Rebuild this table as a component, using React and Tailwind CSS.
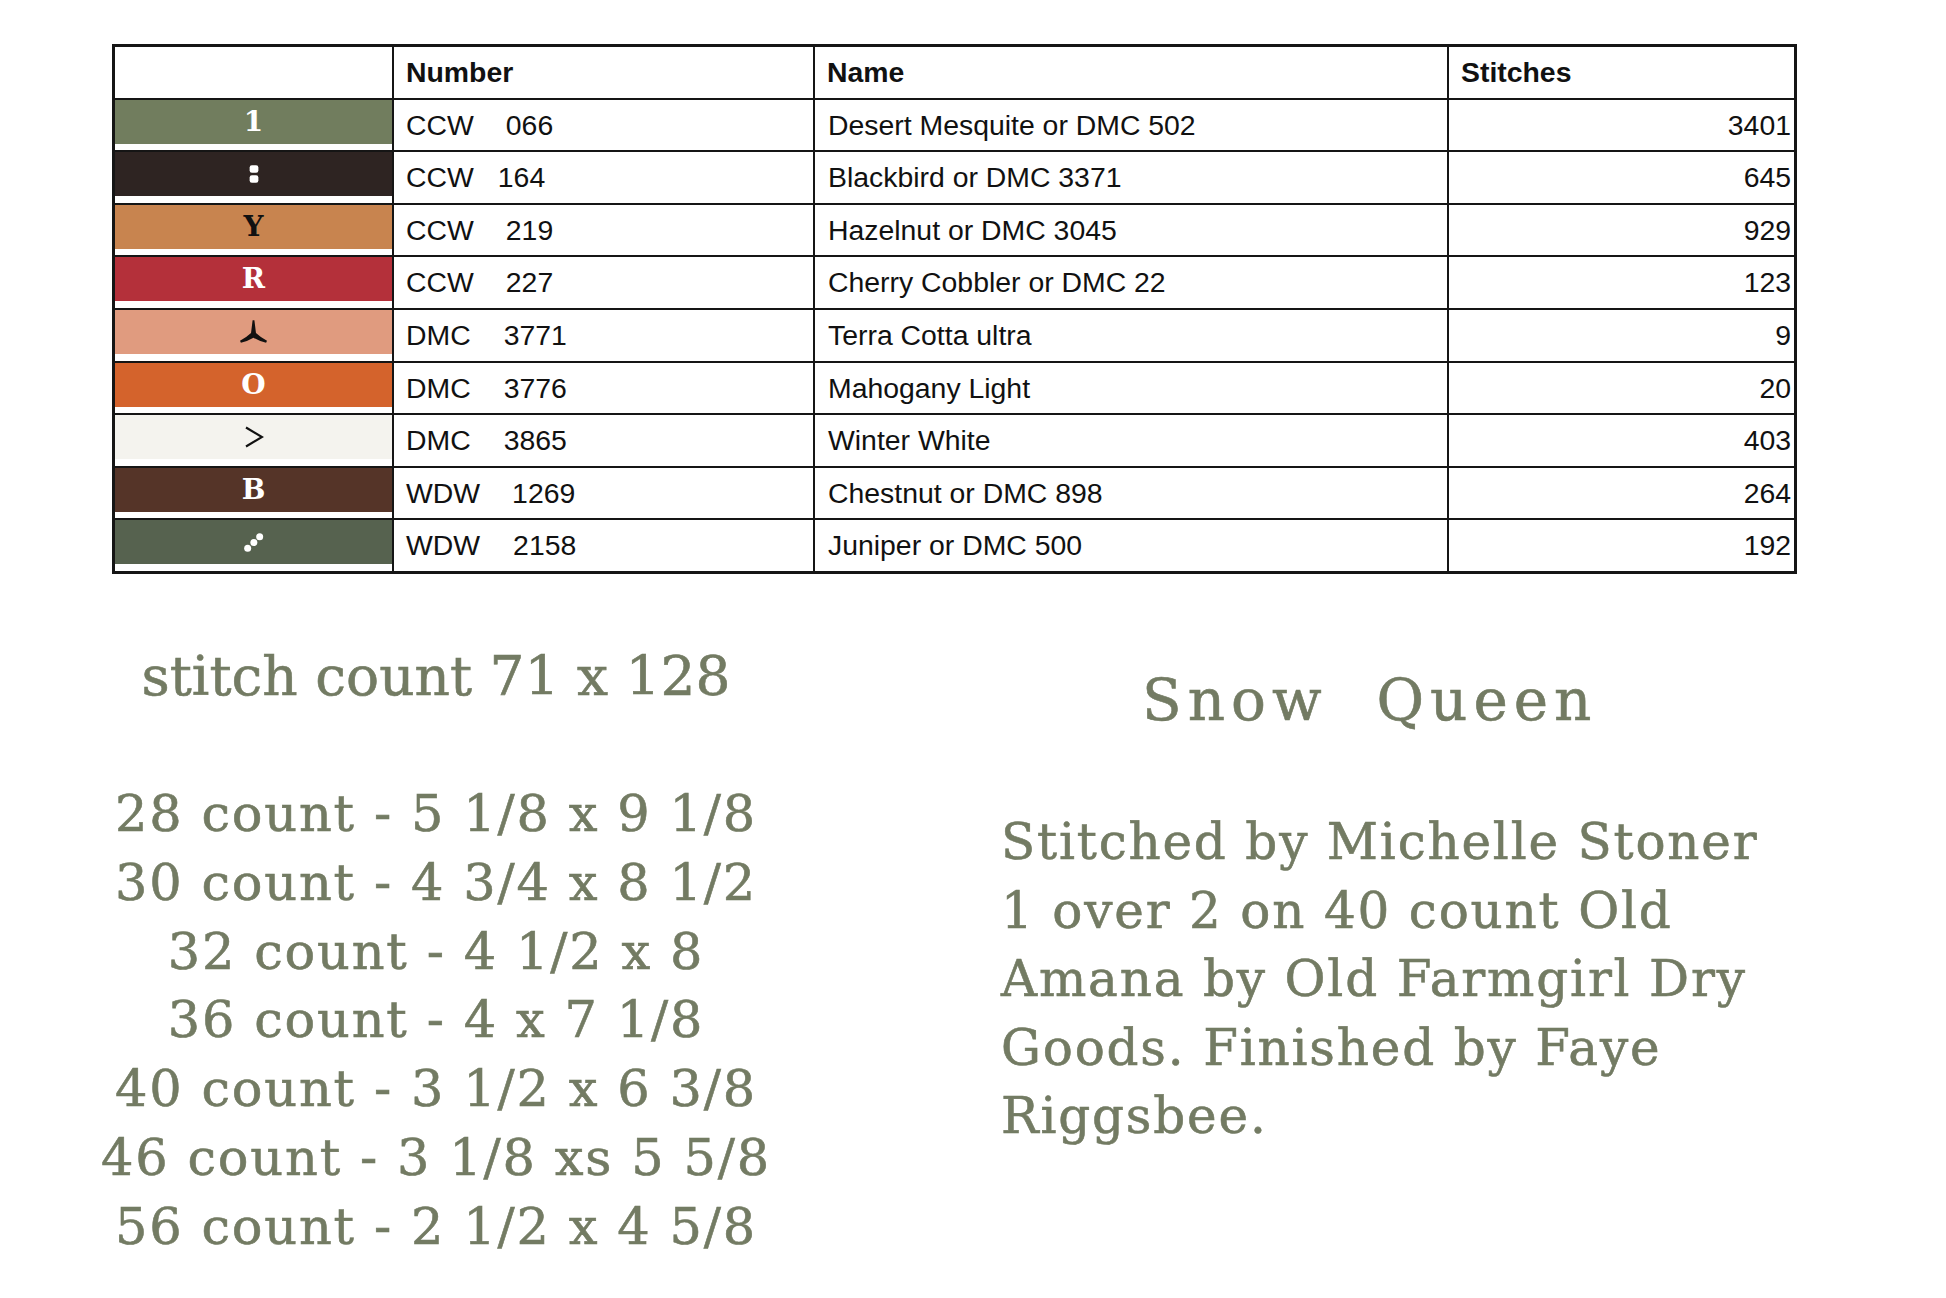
import React from "react";

const sage = "text-[#737b63]";

const TriStar = () => (
  <svg width="27" height="23" viewBox="0 0 24 20">
    <path d="M11.2 0 L12.8 0 L14.2 11.3 Q18.5 15.3 24 18.3 L23.2 20 Q17 18.6 12 15.6 Q7 18.6 0.8 20 L0 18.3 Q5.5 15.3 9.8 11.3 Z" fill="#111" />
  </svg>
);

const Dots = () => (
  <svg width="21" height="21" viewBox="0 0 18 18">
    <circle cx="4" cy="14" r="3" fill="#fff" />
    <circle cx="9.3" cy="9" r="3" fill="#fff" />
    <circle cx="14.3" cy="4" r="3" fill="#fff" />
  </svg>
);

const Colon = () => (
  <svg width="10" height="20" viewBox="0 0 8 16">
    <rect x="0.5" y="1" width="7" height="6" rx="1.8" fill="#fff" />
    <rect x="0.5" y="9" width="7" height="6" rx="1.8" fill="#fff" />
  </svg>
);

const Chevron = () => (
  <svg width="20" height="22" viewBox="0 0 20 22">
    <polyline points="2,1.5 18,11 2,20.5" fill="none" stroke="#111" strokeWidth="2.2" />
  </svg>
);

const rows = [
  { sym: "1", bg: "bg-[#717d5e]", fg: "text-white", brand: "CCW", num: "066", gap: "ml-[32px]", name: "Desert Mesquite or DMC 502", st: "3401" },
  { sym: <Colon />, bg: "bg-[#2e2422]", fg: "text-white", brand: "CCW", num: "164", gap: "ml-[24px]", name: "Blackbird or DMC 3371", st: "645" },
  { sym: "Y", bg: "bg-[#c8844f]", fg: "text-[#111]", brand: "CCW", num: "219", gap: "ml-[32px]", name: "Hazelnut or DMC 3045", st: "929" },
  { sym: "R", bg: "bg-[#b4303a]", fg: "text-white", brand: "CCW", num: "227", gap: "ml-[32px]", name: "Cherry Cobbler or DMC 22", st: "123" },
  { sym: <TriStar />, bg: "bg-[#e09b7f]", fg: "text-[#111]", brand: "DMC", num: "3771", gap: "ml-[33px]", name: "Terra Cotta ultra", st: "9" },
  { sym: "O", bg: "bg-[#d4632c]", fg: "text-white", brand: "DMC", num: "3776", gap: "ml-[33px]", name: "Mahogany Light", st: "20" },
  { sym: <Chevron />, bg: "bg-[#f4f3ee]", fg: "text-[#111]", brand: "DMC", num: "3865", gap: "ml-[33px]", name: "Winter White", st: "403" },
  { sym: "B", bg: "bg-[#553428]", fg: "text-white", brand: "WDW", num: "1269", gap: "ml-[32px]", name: "Chestnut or DMC 898", st: "264" },
  { sym: <Dots />, bg: "bg-[#56624f]", fg: "text-white", brand: "WDW", num: "2158", gap: "ml-[33px]", name: "Juniper or DMC 500", st: "192" },
];

const counts = [
  "28 count - 5 1/8 x 9 1/8",
  "30 count - 4 3/4 x 8 1/2",
  "32 count - 4 1/2 x 8",
  "36 count - 4 x 7 1/8",
  "40 count - 3 1/2 x 6 3/8",
  "46 count - 3 1/8 xs 5 5/8",
  "56 count - 2 1/2 x 4 5/8",
];

const notes = [
  "Stitched by Michelle Stoner",
  "1 over 2 on 40 count Old",
  "Amana by Old Farmgirl Dry",
  "Goods. Finished by Faye",
  "Riggsbee.",
];

export default function App() {
  return (
    <div className="min-h-screen w-[1946px] bg-white pt-[44px] pl-[112px]">
      {/* floss key table */}
      <div className="grid w-[1685px] grid-cols-[277px_419px_632px_345px] auto-rows-[50.6px] gap-[2px] border-[3px] border-[#151515] bg-[#151515] font-['Liberation_Sans',Arial,sans-serif] text-[28.4px] text-[#111]">
        <div className="bg-white" />
        <div className="flex items-center bg-white pl-[12px] font-bold">Number</div>
        <div className="flex items-center bg-white pl-[12px] font-bold">Name</div>
        <div className="flex items-center bg-white pl-[12px] font-bold">Stitches</div>
        {rows.map((r, i) => (
          <React.Fragment key={i}>
            <div className="flex flex-col bg-white">
              <div className={`flex h-[44px] items-center justify-center ${r.bg} ${r.fg} font-['DejaVu_Serif',serif] text-[28px] font-bold leading-none`}>
                {r.sym}
              </div>
            </div>
            <div className="flex items-center bg-white pl-[12px]">
              <span>{r.brand}</span>
              <span className={r.gap}>{r.num}</span>
            </div>
            <div className="flex items-center bg-white pl-[13px]">{r.name}</div>
            <div className="flex items-center justify-end bg-white pr-[3px]">{r.st}</div>
          </React.Fragment>
        ))}
      </div>

      {/* sizes + notes */}
      <div className={`mt-[72px] flex font-['DejaVu_Serif',serif] ${sage} [-webkit-text-stroke:0.6px_#737b63]`}>
        <div className="-ml-[26px] w-[700px] whitespace-nowrap text-center">
          <div className="text-[55px] leading-[60px]">stitch count 71 x 128</div>
          <div className="mt-[74px] text-[51px] leading-[68.8px] tracking-[1.8px]">
            {counts.map((c) => (
              <div key={c}>{c}</div>
            ))}
          </div>
        </div>
        <div className="ml-[215px] whitespace-nowrap">
          <div className="mt-[22px] pl-[141px] whitespace-pre text-[58px] leading-[64px] tracking-[6px]">Snow  Queen</div>
          <div className="mt-[76px] text-[50px] leading-[68.6px] tracking-[1.8px]">
            {notes.map((n) => (
              <div key={n}>{n}</div>
            ))}
          </div>
        </div>
      </div>
    </div>
  );
}
